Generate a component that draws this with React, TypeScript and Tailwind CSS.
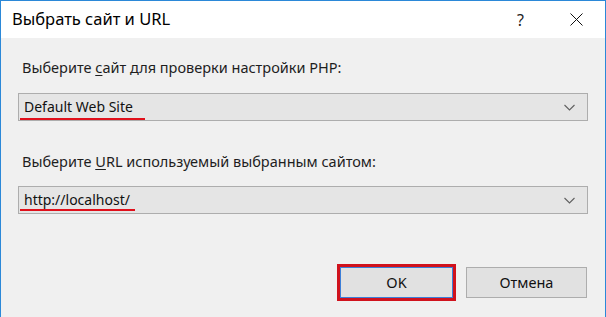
import React from "react";

const font = { fontFamily: '"Noto Sans", "Open Sans", "Liberation Sans", sans-serif' };

function Chevron() {
  return (
    <svg width="11" height="7" viewBox="0 0 11 7" className="shrink-0">
      <polyline points="0.5,1 5.5,6 10.5,1" fill="none" stroke="#606060" strokeWidth="1.1" />
    </svg>
  );
}

function Select({ value, lineWidth, lineTop }: { value: string; lineWidth: number; lineTop: string }) {
  return (
    <div className="relative flex h-[28px] items-center justify-between border border-[#adadad] bg-[#e5e5e5] pl-[5px] pr-[12px]">
      <span className="text-[14px] leading-none text-[#111]">{value}</span>
      <Chevron />
      <div className={`absolute left-[1px] ${lineTop} h-[2px] bg-[#e0101b]`} style={{ width: lineWidth }} />
    </div>
  );
}

export default function App() {
  return (
    <div className="h-[317px] w-[606px] overflow-hidden bg-[#f0f0f0]" style={font}>
      <div className="flex h-[317px] flex-col border-x border-t border-[#2b88d8]">
        <div className="flex h-[37px] shrink-0 items-center bg-white pl-[11px] pr-[22px]">
          <span className="text-[16.5px] text-black">Выбрать сайт и URL</span>
          <span className="ml-auto mr-[46px] text-[16px] text-[#222]">?</span>
          <svg width="13" height="13" viewBox="0 0 13 13">
            <line x1="0.5" y1="0.5" x2="12.5" y2="12.5" stroke="#111" strokeWidth="1" />
            <line x1="12.5" y1="0.5" x2="0.5" y2="12.5" stroke="#111" strokeWidth="1" />
          </svg>
        </div>
        <div className="flex flex-1 flex-col px-[17px] pt-[20px]">
          <div className="pl-[4px] text-[14.5px] leading-[18px] text-[#1e1e1e]">
            Выберите <span className="underline underline-offset-2">с</span>айт для проверки настройки PHP:
          </div>
          <div className="mt-[17px]">
            <Select value="Default Web Site" lineWidth={125} lineTop="top-[24px]" />
          </div>
          <div className="mt-[31px] pl-[4px] text-[14.5px] leading-[18px] text-[#1e1e1e]">
            Выберите <span className="underline underline-offset-2">U</span>RL используемый выбранным сайтом:
          </div>
          <div className="mt-[16px]">
            <Select value="http://localhost/" lineWidth={115} lineTop="top-[22px]" />
          </div>
          <div className="mt-[50px] flex items-center justify-end gap-[10px] pr-[1px]">
            <div className="border-[3px] border-[#d0121d]">
              <button className="flex h-[31px] w-[113px] items-center justify-center border border-[#3c7fd8] bg-[#e1e1e1] text-[14.5px] text-[#111]">
                OK
              </button>
            </div>
            <button className="flex h-[31px] w-[121px] items-center justify-center border border-[#adadad] bg-[#e1e1e1] text-[14.5px] text-[#111]">
              Отмена
            </button>
          </div>
        </div>
      </div>
    </div>
  );
}
